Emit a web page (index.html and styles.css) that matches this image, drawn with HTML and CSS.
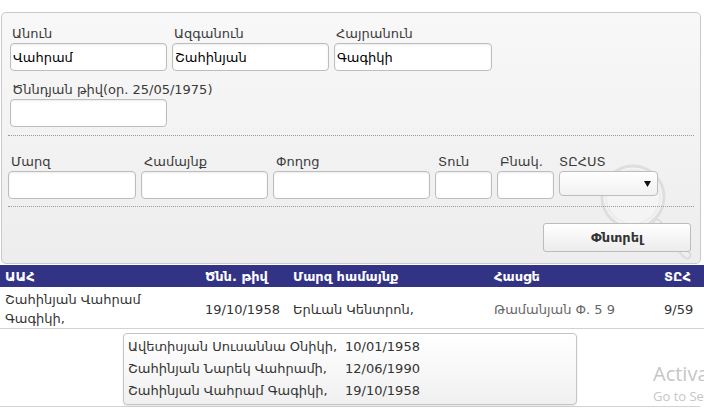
FILE: index.html
```html
<!DOCTYPE html>
<html lang="hy">
<head>
<meta charset="utf-8">
<link rel="stylesheet" href="styles.css">
</head>
<body>
<form class="panel">
  <svg class="magnifier" width="110" height="110" viewBox="0 0 110 110">
    <circle cx="34" cy="34" r="31" fill="#f4f4f4" stroke="#dedede" stroke-width="3"/>
    <circle cx="34" cy="34" r="27" fill="none" stroke="#ececec" stroke-width="2"/>
    <line x1="58" y1="60" x2="88" y2="92" stroke="#dcdcdc" stroke-width="9" stroke-linecap="round"/>
    <line x1="58" y1="60" x2="88" y2="92" stroke="#efefef" stroke-width="5" stroke-linecap="round"/>
  </svg>
  <div class="row">
    <label class="field"><span class="lbl">Անուն</span><input class="inp w157" value="Վահրամ"></label>
    <label class="field"><span class="lbl">Ազգանուն</span><input class="inp w157" value="Շահինյան"></label>
    <label class="field"><span class="lbl">Հայրանուն</span><input class="inp w158" value="Գագիկի"></label>
  </div>
  <div class="row row-gap">
    <label class="field"><span class="lbl">Ծննդյան թիվ(օր. 25/05/1975)</span><input class="inp w157" value=""></label>
  </div>
  <div class="sep"></div>
  <div class="row row-addr">
    <label class="field"><span class="lbl">Մարզ</span><input class="inp w128"></label>
    <label class="field"><span class="lbl">Համայնք</span><input class="inp w127"></label>
    <label class="field"><span class="lbl">Փողոց</span><input class="inp w157"></label>
    <label class="field"><span class="lbl">Տուն</span><input class="inp w57"></label>
    <label class="field"><span class="lbl">Բնակ.</span><input class="inp w57"></label>
    <div class="field"><span class="lbl lbl-sel">ՏԸՀՍՏ</span>
      <div class="select"><svg width="7" height="6" viewBox="0 0 7 6"><path d="M0 0H7L3.5 6Z" fill="#111"/></svg></div>
    </div>
  </div>
  <div class="sep sep2"></div>
  <div class="actions">
    <button type="button" class="btn">Փնտրել</button>
  </div>
</form>

<div class="results">
  <table class="grid">
    <colgroup>
      <col class="c1"><col class="c2"><col class="c3"><col class="c4"><col class="c5">
    </colgroup>
    <thead>
      <tr><th>ԱԱՀ</th><th>Ծնն. թիվ</th><th>Մարզ համայնք</th><th>Հասցե</th><th>ՏԸՀ</th></tr>
    </thead>
    <tbody>
      <tr>
        <td>Շահինյան Վահրամ Գագիկի,</td>
        <td>19/10/1958</td>
        <td>Երևան Կենտրոն,</td>
        <td class="addr">Թամանյան Փ. 5 9</td>
        <td>9/59</td>
      </tr>
    </tbody>
  </table>
  <div class="footer-space"></div>
  <ul class="suggest">
    <li><span class="nm">Ավետիսյան Սուսաննա Օնիկի,</span>10/01/1958</li>
    <li><span class="nm">Շահինյան Նարեկ Վահրամի,</span>12/06/1990</li>
    <li><span class="nm">Շահինյան Վահրամ Գագիկի,</span>19/10/1958</li>
  </ul>
</div>

<div class="watermark">
  <div class="wm1">Activate Windows</div>
  <div class="wm2">Go to Settings to activate Windows.</div>
</div>
</body>
</html>
```
FILE: styles.css
```css
html, body {
  margin: 0;
  padding: 0;
  background: #fff;
  width: 704px;
  height: 413px;
  overflow: hidden;
  font-family: "DejaVu Sans", Verdana, sans-serif;
  font-size: 13px;
  color: #333;
}

.panel {
  position: relative;
  margin: 12px 3px 0 1px;
  padding: 13px 8px 11px 8px;
  border: 1px solid #c9c9c9;
  border-radius: 5px;
  background: linear-gradient(#f8f8f8, #ededed);
}

.magnifier {
  position: absolute;
  left: 597px;
  top: 150px;
  z-index: 0;
}

.row {
  position: relative;
  z-index: 1;
  display: flex;
  gap: 5px;
}

.row-gap { margin-top: 11px; }

.row-addr { margin-left: -2px; }

.field {
  display: flex;
  flex-direction: column;
}

.lbl {
  display: block;
  height: 16px;
  line-height: 16px;
  padding-left: 2px;
  margin-bottom: 1px;
  color: #3a3a3a;
  white-space: nowrap;
}

.row-addr .lbl { padding-left: 3px; }
.row-addr .lbl-sel { padding-left: 0; }

.inp {
  box-sizing: border-box;
  height: 28px;
  margin: 0;
  padding: 0 2px;
  border: 1px solid #bdbdbd;
  border-radius: 4px;
  background: #fff;
  box-shadow: inset 0 1px 2px rgba(0,0,0,0.08);
  font-family: "DejaVu Sans", Verdana, sans-serif;
  font-size: 13px;
  color: #000;
  outline: none;
}

.w157 { width: 157px; }
.w158 { width: 158px; }
.w128 { width: 128px; }
.w127 { width: 127px; }
.w57 { width: 57px; }

.select {
  box-sizing: border-box;
  width: 99px;
  height: 25px;
  border: 1px solid #bdbdbd;
  border-radius: 4px;
  background: linear-gradient(#fff, #f1f1f1);
  display: flex;
  align-items: center;
  justify-content: flex-end;
  padding-right: 6px;
}

.sep {
  position: relative;
  z-index: 1;
  margin: 8px -2px 18px -2px;
  border-top: 1px dotted #9a9a9a;
}

.sep2 { margin-bottom: 16px; margin-top: 7px; }

.actions {
  position: relative;
  z-index: 1;
  display: flex;
  justify-content: flex-end;
  padding-right: 1px;
}

.btn {
  box-sizing: border-box;
  width: 148px;
  height: 29px;
  margin: 0;
  border: 1px solid #bcbcbc;
  border-radius: 3px;
  background: linear-gradient(#ffffff, #ececec);
  font-family: "DejaVu Sans", Verdana, sans-serif;
  font-size: 13px;
  font-weight: bold;
  color: #333;
}

.results {
  position: relative;
  margin-top: 1px;
}

.grid {
  width: 704px;
  border-collapse: collapse;
  table-layout: fixed;
}

.c1 { width: 200px; }
.c2 { width: 88px; }
.c3 { width: 201px; }
.c4 { width: 170px; }
.c5 { width: 45px; }

.grid th {
  height: 22px;
  padding: 0 5px;
  background: #333386;
  color: #fff;
  font-weight: bold;
  font-size: 13px;
  text-align: left;
  white-space: nowrap;
}

.grid td {
  padding: 3px 5px 0 5px;
  height: 38px;
  line-height: 19px;
  vertical-align: middle;
  color: #333;
  border-bottom: 1px solid #d3d3d3;
}

.grid td:first-child { vertical-align: top; }

.grid td.addr { color: #666; }

.footer-space {
  width: 700px;
  height: 77px;
  border-bottom: 1px solid #d3d3d3;
}

.suggest {
  position: absolute;
  left: 123px;
  top: 68px;
  margin: 0;
  padding: 2px 0 0 0;
  list-style: none;
  box-sizing: border-box;
  width: 454px;
  height: 72px;
  border: 1px solid #c4c4c4;
  border-radius: 4px;
  background: linear-gradient(#ffffff, #f0f0f0);
  box-shadow: 0 1px 2px rgba(0,0,0,0.1);
}

.suggest li {
  height: 22px;
  line-height: 22px;
  padding-left: 4px;
  color: #333;
  white-space: nowrap;
}

.suggest .nm {
  display: inline-block;
  width: 217px;
}

.watermark {
  position: absolute;
  left: 653px;
  top: 361px;
  width: 51px;
  overflow: hidden;
  font-family: "Open Sans", "Noto Sans", sans-serif;
  color: #c6c6c6;
  white-space: nowrap;
  pointer-events: none;
}

.wm1 { font-size: 20px; line-height: 26px; }
.wm2 { font-size: 13px; line-height: 18px; }
```
